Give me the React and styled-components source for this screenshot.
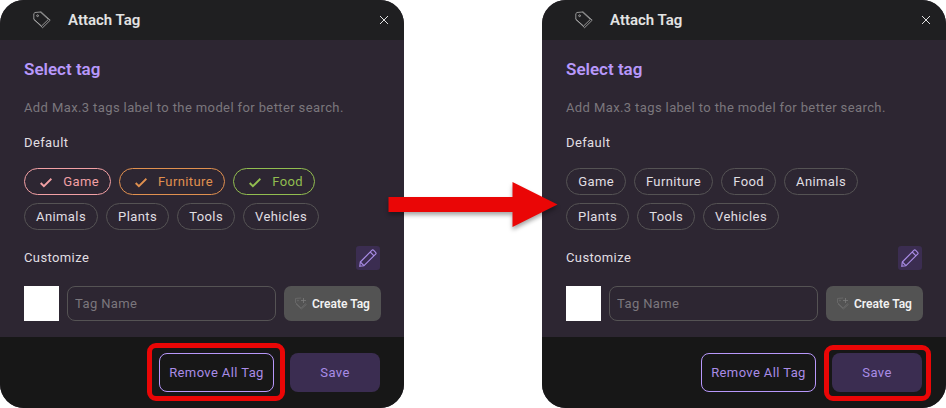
import React from "react";
import styled, { createGlobalStyle } from "styled-components";

const GlobalStyle = createGlobalStyle`
  *, *::before, *::after { box-sizing: border-box; }
  body {
    margin: 0;
    background: #fff;
    font-family: Roboto, "Liberation Sans", sans-serif;
    overflow: hidden;
  }
  button, input { font: inherit; letter-spacing: inherit; }
`;

const Stage = styled.main`
  position: relative;
  display: flex;
  justify-content: space-between;
  width: 946px;
  height: 408px;
`;

const Dialog = styled.section`
  display: flex;
  flex-direction: column;
  width: 404px;
  height: 408px;
  border-radius: 24px;
  overflow: hidden;
  background: #2d2632;
  color: #e0dfe2;
  font-size: 13px;
  letter-spacing: 0.39px;
`;

const Header = styled.header`
  display: flex;
  align-items: center;
  height: 40px;
  flex: none;
  padding: 0 16px 0 32px;
  background: #1f1f21;
`;

const Title = styled.h1`
  flex: 1;
  margin: 0 0 0 16px;
  font-size: 15px;
  line-height: 20px;
  font-weight: 600;
  letter-spacing: 0;
  color: #e3e3e3;
`;

const CloseButton = styled.button`
  display: flex;
  padding: 0;
  border: 0;
  background: none;
`;

const Body = styled.div`
  height: 297px;
  flex: none;
  padding: 20px 23px 0 24px;
`;

const Heading = styled.h2`
  margin: 0 0 2px;
  font-size: 17px;
  line-height: 18px;
  font-weight: 600;
  letter-spacing: 0;
  color: #b898fb;
`;

const Hint = styled.p`
  margin: 20px 0 0;
  line-height: 20px;
  color: #7b777d;
`;

const Label = styled.h3`
  margin: 0;
  font-size: 13px;
  line-height: 20px;
  font-weight: 400;
`;

const Chips = styled.div`
  display: flex;
  flex-wrap: wrap;
  gap: 8px;
  margin: 15px 0 0;
  width: 300px;
`;

const Chip = styled.button`
  display: flex;
  align-items: center;
  justify-content: flex-end;
  width: ${(p) => p.$width}px;
  height: 27px;
  padding: 0 11px 0 0;
  border: 1px solid ${(p) => p.$color || "#555354"};
  border-radius: 14px;
  background: none;
  color: ${(p) => p.$color || "inherit"};
  white-space: nowrap;

  svg { margin: 2px 11px 0 0; flex: none; }
`;

const DefaultLabel = styled(Label)`
  margin-top: 15px;
`;

const CustomizeRow = styled.div`
  display: flex;
  align-items: center;
  justify-content: space-between;
  height: 24px;
  margin: 16px 1px 0 0;
`;

const EditButton = styled.button`
  display: flex;
  align-items: center;
  justify-content: center;
  width: 24px;
  height: 24px;
  padding: 0;
  border: 0;
  border-radius: 3px;
  background: #3b2d51;
`;

const CreateRow = styled.div`
  display: flex;
  gap: 8px;
  height: 35px;
  margin-top: 16px;
`;

const Swatch = styled.div`
  width: 35px;
  flex: none;
  background: #fff;
`;

const NameInput = styled.input`
  width: 209px;
  padding: 0 8px 0 7px;
  border: 1px solid #555354;
  border-radius: 8px;
  outline: 0;
  background: none;
  color: inherit;
  &::placeholder { color: #7b777d; opacity: 1; }
`;

const CreateButton = styled.button`
  display: flex;
  align-items: center;
  width: 97px;
  padding: 0 0 0 11px;
  border: 0;
  border-radius: 7px;
  background: #535353;
  color: #f2f2f2;
  font-size: 12px;
  font-weight: 600;
  letter-spacing: 0;
  white-space: nowrap;

  svg { margin-right: 5px; flex: none; }
`;

const Footer = styled.footer`
  display: flex;
  justify-content: flex-end;
  gap: 16px;
  flex: 1;
  padding: 16px 24px 16px 0;
  background: #171717;
`;

const ActionButton = styled.button`
  position: relative;
  width: ${(p) => (p.$filled ? 90 : 115)}px;
  height: 39px;
  padding: 0;
  border: ${(p) => (p.$filled ? "0" : "1px solid #b898fb")};
  border-radius: 8px;
  background: ${(p) => (p.$filled ? "#3b2d51" : "none")};
  color: #a98ce6;
  white-space: nowrap;
`;

const Marker = styled.span`
  position: absolute;
  inset: ${(p) => p.$inset};
  border: 5px solid #ea0606;
  border-radius: 9px;
  pointer-events: none;
`;

const Arrow = styled.svg`
  position: absolute;
  left: 380px;
  top: 170px;
  filter: drop-shadow(0 3px 2px rgba(0, 0, 0, 0.35));
`;

const TagIcon = () => (
  <svg width="20" height="20" viewBox="0 0 20 20" fill="none" stroke="#b4b4b4" strokeWidth="0.8" strokeLinejoin="round">
    <path d="M1.8 3.6 L3 2.5 L8.3 2 L16.4 9.4 L9.6 16 L1.8 9.3 Z" />
    <path d="M8.3 2 L9.3 2.1 L18.2 10.2 L10.6 17.7 L1.8 9.3" />
    <circle cx="5.6" cy="5.7" r="0.9" />
  </svg>
);

const CloseIcon = () => (
  <svg width="8" height="8" viewBox="0 0 8 8" fill="none" stroke="#e0e0e0" strokeWidth="1">
    <path d="M0 0 L8 8 M8 0 L0 8" />
  </svg>
);

const CheckIcon = () => (
  <svg width="12" height="10" viewBox="0 0 12 10" fill="none" stroke="currentColor" strokeWidth="1.9">
    <path d="M0.7 5 L3.9 8.2 L11.4 0.8" />
  </svg>
);

const PencilIcon = () => (
  <svg width="20" height="20" viewBox="0 0 20 20" fill="none" stroke="#a98ce6" strokeWidth="1.15" strokeLinejoin="round">
    <path d="M2.3 14 L13.8 2.4 Q14.8 1.5 15.7 2.4 L17.6 4.3 Q18.5 5.2 17.6 6.2 L6 17.7 L1.8 18.3 Z" />
    <path d="M12.2 4 L16 7.8 M2.3 14 L6 17.7" />
  </svg>
);

const AddTagIcon = () => (
  <svg width="12" height="13" viewBox="0 0 12 13" fill="none" stroke="#717171" strokeWidth="0.7">
    <path d="M6.2 1 L0.6 1.4 L0.5 5.7 L6.1 11 L10.9 6.5" />
    <path d="M1 7 L6.3 12 L11.6 7.3" />
    <path d="M6 3.5 H11 M8.5 1 V6" stroke="#808080" />
    <circle cx="2.9" cy="3.6" r="0.5" />
  </svg>
);

const widths = { Game: 60, Furniture: 79, Food: 55, Animals: 74, Plants: 63, Tools: 58, Vehicles: 76 };
const tagNames = Object.keys(widths);

function TagDialog({ selected = {}, markRemove, markSave }) {
  return (
    <Dialog>
      <Header>
        <TagIcon />
        <Title>Attach Tag</Title>
        <CloseButton aria-label="Close"><CloseIcon /></CloseButton>
      </Header>
      <Body>
        <Heading>Select tag</Heading>
        <Hint>Add Max.3 tags label to the model for better search.</Hint>
        <DefaultLabel>Default</DefaultLabel>
        <Chips>
          {tagNames.map((name) => (
            <Chip key={name} $color={selected[name]} $width={widths[name] + (selected[name] ? 27 : 0)}>
              {selected[name] && <CheckIcon />}
              {name}
            </Chip>
          ))}
        </Chips>
        <CustomizeRow>
          <Label>Customize</Label>
          <EditButton aria-label="Edit tags"><PencilIcon /></EditButton>
        </CustomizeRow>
        <CreateRow>
          <Swatch />
          <NameInput placeholder="Tag Name" />
          <CreateButton><AddTagIcon />Create Tag</CreateButton>
        </CreateRow>
      </Body>
      <Footer>
        <ActionButton>
          Remove All Tag
          {markRemove && <Marker $inset="-11px -12px -10px -13px" />}
        </ActionButton>
        <ActionButton $filled>
          Save
          {markSave && <Marker $inset="-8px -9px -9px -8px" />}
        </ActionButton>
      </Footer>
    </Dialog>
  );
}

export default function App() {
  return (
    <>
      <GlobalStyle />
      <Stage>
        <TagDialog selected={{ Game: "#f2a0a4", Furniture: "#e0904f", Food: "#92bd50" }} markRemove />
        <TagDialog markSave />
        <Arrow width="190" height="70" viewBox="0 0 190 70" aria-hidden="true">
          <path d="M8.5 27 H132.5 V12 L177.5 34.5 L132.5 57 V42 H8.5 Z" fill="#ea0606" />
        </Arrow>
      </Stage>
    </>
  );
}
